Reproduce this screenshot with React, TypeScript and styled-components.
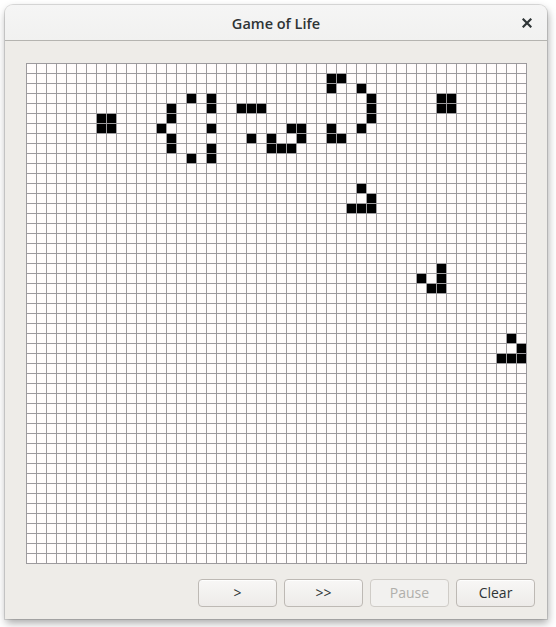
import React from "react";
import styled, { createGlobalStyle } from "styled-components";

const Global = createGlobalStyle`
  html, body { margin: 0; padding: 0; background: #ffffff; }
  body { font-family: "Open Sans", "Noto Sans", sans-serif; }
`;

const Page = styled.div`
  padding: 5px 0 0 5px;
  width: 556px;
  height: 627px;
  box-sizing: border-box;
`;

const Window = styled.div`
  width: 542px;
  height: 614px;
  box-sizing: border-box;
  display: flex;
  flex-direction: column;
  background: #eeece8;
  border-radius: 8px 8px 0 0;
  box-shadow: 0 0 0 1px rgba(0, 0, 0, 0.12), 1px 4px 8px rgba(0, 0, 0, 0.35);
  overflow: hidden;
`;

const Header = styled.div`
  height: 36px;
  flex: none;
  box-sizing: border-box;
  display: flex;
  align-items: center;
  justify-content: center;
  position: relative;
  background: linear-gradient(#f5f5f5, #f1f1f0);
  border-bottom: 1px solid #b5b4b0;
`;

const Title = styled.div`
  font-size: 14.5px;
  font-weight: 600;
  color: #2e3436;
  padding-top: 1px;
`;

const Close = styled.button`
  position: absolute;
  right: 12px;
  top: 10px;
  width: 16px;
  height: 16px;
  padding: 0;
  border: none;
  background: transparent;
  display: flex;
  align-items: center;
  justify-content: center;
`;

const Body = styled.div`
  flex: 1;
  display: flex;
  flex-direction: column;
  padding: 22px 12px 12px 21px;
`;

const Board = styled.div`
  display: grid;
  grid-template-columns: repeat(50, 9px);
  grid-auto-rows: 9px;
  gap: 1px;
  padding: 1px;
  width: 501px;
  box-sizing: border-box;
  background: #9c9a9d;
`;

const Cell = styled.div<{ $alive: boolean }>`
  background: ${(p) => (p.$alive ? "#000000" : "#fffcfb")};
`;

const Actions = styled.div`
  margin-top: 15px;
  display: flex;
  justify-content: flex-end;
  gap: 7px;
`;

const Button = styled.button`
  width: 79px;
  height: 28px;
  box-sizing: border-box;
  border: 1px solid #bdb9b4;
  border-radius: 4px;
  background: linear-gradient(#f8f7f6, #edebe9);
  font-family: "Open Sans", "Noto Sans", sans-serif;
  font-size: 14px;
  color: #2e3436;
  padding: 0 0 1px;
  box-shadow: inset 0 1px rgba(255, 255, 255, 0.8);
  &:disabled {
    color: #b0afab;
    border-color: #cfccc7;
    background: #f2f1ef;
    box-shadow: none;
  }
`;

const alive: [number, number][] = [
  [7, 5], [8, 5], [7, 6], [8, 6],
  [16, 3], [18, 3], [14, 4], [18, 4], [21, 4], [22, 4], [23, 4], [14, 5], [13, 6], [18, 6],
  [26, 6], [27, 6], [14, 7], [22, 7], [24, 7], [27, 7], [14, 8], [18, 8], [24, 8], [25, 8],
  [26, 8], [16, 9], [18, 9],
  [30, 1], [31, 1], [30, 2], [33, 2], [34, 3], [34, 4], [34, 5], [41, 3], [42, 3], [41, 4],
  [42, 4], [30, 6], [33, 6], [30, 7], [31, 7], [33, 12], [34, 13], [32, 14], [33, 14], [34, 14],
  [41, 20], [39, 21], [41, 21], [40, 22], [41, 22], [48, 27], [49, 28], [47, 29], [48, 29], [49, 29],
];

const aliveSet = new Set(alive.map(([c, r]) => `${c},${r}`));

export default function App() {
  const cells = [];
  for (let r = 0; r < 50; r++) {
    for (let c = 0; c < 50; c++) {
      cells.push(<Cell key={`${c}-${r}`} $alive={aliveSet.has(`${c},${r}`)} />);
    }
  }
  return (
    <Page>
      <Global />
      <Window>
        <Header>
          <Title>Game of Life</Title>
          <Close aria-label="Close">
            <svg width="10" height="10" viewBox="0 0 10 10">
              <path d="M1.5 1.5 L8.5 8.5 M8.5 1.5 L1.5 8.5" stroke="#2e3436" strokeWidth="2.2" strokeLinecap="square" />
            </svg>
          </Close>
        </Header>
        <Body>
          <Board>{cells}</Board>
          <Actions>
            <Button>&gt;</Button>
            <Button>&gt;&gt;</Button>
            <Button disabled>Pause</Button>
            <Button>Clear</Button>
          </Actions>
        </Body>
      </Window>
    </Page>
  );
}
